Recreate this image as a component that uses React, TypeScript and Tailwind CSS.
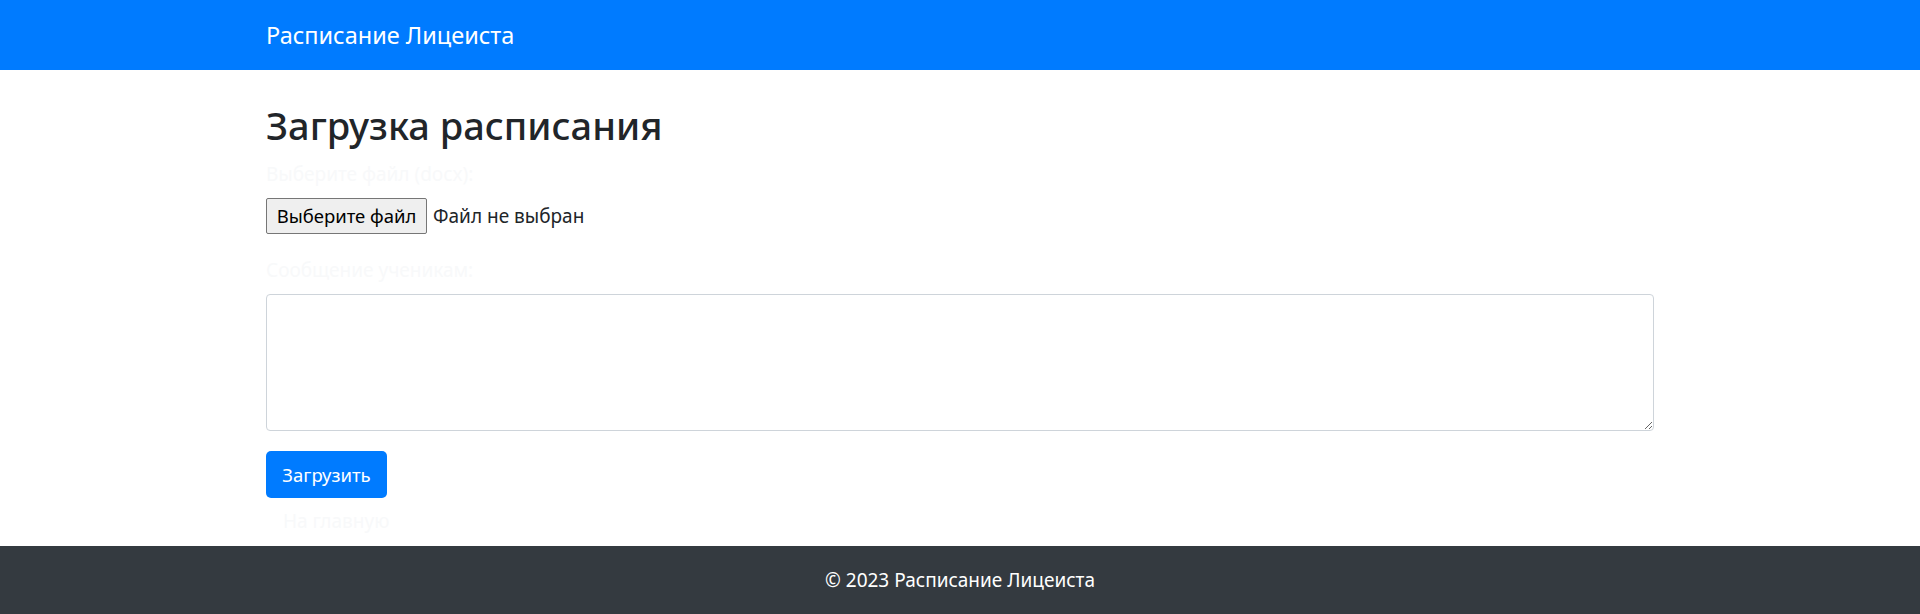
export default function App() {
  return (
    <div className="min-h-[614px] bg-white font-['Noto_Sans',sans-serif] text-[#212529]">
      <nav className="h-[70px] bg-[#007bff]">
        <div className="mx-auto flex h-full w-[1388px] items-center">
          <span className="text-[23.5px] leading-[70px] text-white">Расписание Лицеиста</span>
        </div>
      </nav>

      <main className="mx-auto w-[1388px] pt-[32px]">
        <h1 className="mb-[12px] text-[38px] font-medium leading-[46px]">Загрузка расписания</h1>

        <label className="mb-[10px] block text-[19px] leading-[28px] text-[#f8f9fa]">Выберите файл (docx):</label>
        <div className="flex items-center">
          <button className="h-[36px] w-[161px] rounded-[2px] border border-[#767676] bg-[#efefef] text-[18.5px] text-black">
            Выберите файл
          </button>
          <span className="ml-[6px] text-[19px]">Файл не выбран</span>
        </div>

        <label className="mt-[22px] mb-[10px] block text-[19px] leading-[28px] text-[#f8f9fa]">Сообщение ученикам:</label>
        <textarea className="block h-[137px] w-full rounded-[4px] border border-[#ced4da] px-3 py-1.5 text-[19px]" />

        <button className="mt-[20px] block h-[47px] w-[121px] rounded-[5px] bg-[#007bff] text-[18.5px] text-white">
          Загрузить
        </button>
        <a className="block px-[17px] pt-[8px] pb-[10px] text-[19px] leading-[30px] text-[#f8f9fa]">На главную</a>
      </main>

      <footer className="flex h-[68px] items-center justify-center bg-[#343a40] text-[19px] text-white">
        © 2023 Расписание Лицеиста
      </footer>
    </div>
  )
}
